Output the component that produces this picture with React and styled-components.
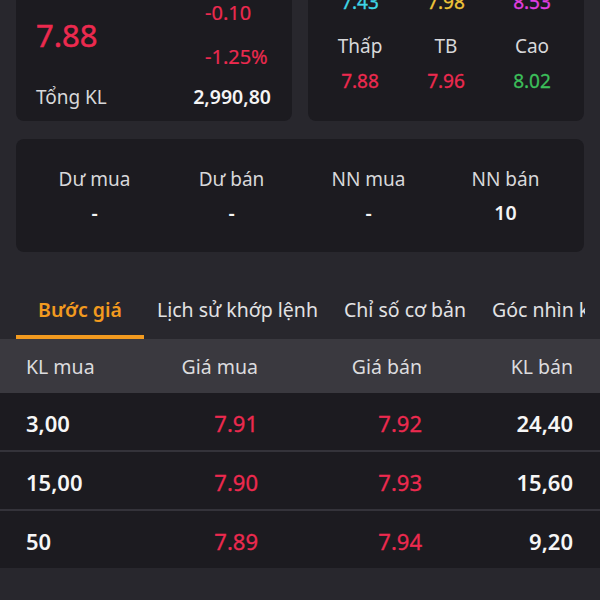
import styled, { createGlobalStyle } from "styled-components";

const GlobalStyle = createGlobalStyle`
  html, body {
    margin: 0;
    padding: 0;
    background: #28272d;
    font-family: "Noto Sans", "Open Sans", sans-serif;
  }
`;

const RED = "#ec2a4f";

const summary = [
  [
    { label: "Sàn", value: "7.43", color: "#3fd6e6" },
    { label: "TC", value: "7.98", color: "#f0c63a" },
    { label: "Trần", value: "8.53", color: "#e23fe0" },
  ],
  [
    { label: "Thấp", value: "7.88", color: RED },
    { label: "TB", value: "7.96", color: RED },
    { label: "Cao", value: "8.02", color: "#3cbf5a" },
  ],
];

const flows = [
  { label: "Dư mua", value: "-" },
  { label: "Dư bán", value: "-" },
  { label: "NN mua", value: "-" },
  { label: "NN bán", value: "10" },
];

const tabs = ["Bước giá", "Lịch sử khớp lệnh", "Chỉ số cơ bản", "Góc nhìn kỹ thuật"];

const book = [
  ["3,00", "7.91", "7.92", "24,40"],
  ["15,00", "7.90", "7.93", "15,60"],
  ["50", "7.89", "7.94", "9,20"],
];

function App() {
  return (
    <>
      <GlobalStyle />
      <Screen>
        <Page>
          <TopGrid>
            <Card>
              <PriceRow>
                <BigPrice>7.88</BigPrice>
                <Changes>
                  <Change>-0.10</Change>
                  <Change>-1.25%</Change>
                </Changes>
              </PriceRow>
              <TotalRow>
                <Label>Tổng KL</Label>
                <Strong>2,990,80</Strong>
              </TotalRow>
            </Card>
            <StatCard>
              {summary.map((row, i) => (
                <StatRow key={i}>
                  {row.map((s) => (
                    <Cell key={s.label}>
                      <Label>{s.label}</Label>
                      <Value color={s.color}>{s.value}</Value>
                    </Cell>
                  ))}
                </StatRow>
              ))}
            </StatCard>
          </TopGrid>
          <FlowCard>
            {flows.map((f) => (
              <Cell key={f.label} gap={6}>
                <Label>{f.label}</Label>
                <Strong>{f.value}</Strong>
              </Cell>
            ))}
          </FlowCard>
        </Page>
        <TabBar>
          {tabs.map((t, i) => (
            <Tab key={t} active={i === 0}>
              {t}
            </Tab>
          ))}
        </TabBar>
        <Table>
          <HeadRow>
            <span>KL mua</span>
            <span>Giá mua</span>
            <span>Giá bán</span>
            <span>KL bán</span>
          </HeadRow>
          {book.map((r) => (
            <BookRow key={r[0]}>
              <Qty>{r[0]}</Qty>
              <Price>{r[1]}</Price>
              <Price>{r[2]}</Price>
              <Qty>{r[3]}</Qty>
            </BookRow>
          ))}
        </Table>
      </Screen>
    </>
  );
}

const Screen = styled.div`
  width: 600px;
  height: 600px;
  overflow: hidden;
  background: #28272d;
`;

const Page = styled.div`
  margin-top: -70px;
  padding: 0 16px;
`;

const TopGrid = styled.div`
  display: grid;
  grid-template-columns: 1fr 1fr;
  gap: 16px;
`;

const Card = styled.div`
  background: #1c1b20;
  border-radius: 8px;
  padding: 0 21px 10px 20px;
  display: flex;
  flex-direction: column;
  justify-content: flex-end;
`;

const PriceRow = styled.div`
  display: flex;
  align-items: center;
  justify-content: space-between;
`;

const BigPrice = styled.div`
  color: ${RED};
  font-size: 31px;
  line-height: 40px;
  -webkit-text-stroke: 0.5px ${RED};
`;

const Changes = styled.div`
  display: flex;
  flex-direction: column;
  gap: 16px;
  width: 66px;
`;

const Change = styled.div`
  color: ${RED};
  font-size: 20px;
  line-height: 28px;
  white-space: nowrap;
  -webkit-text-stroke: 0.2px ${RED};
`;

const TotalRow = styled.div`
  display: flex;
  justify-content: space-between;
  margin-top: 12px;
`;

const Label = styled.div`
  color: #d8d8da;
  font-size: 19px;
  line-height: 28px;
  white-space: nowrap;
`;

const Strong = styled.div`
  color: #f4f4f4;
  font-size: 19.5px;
  line-height: 28px;
  font-weight: 600;
`;

const Value = styled.div`
  color: ${({ color }) => color};
  font-size: 19px;
  line-height: 28px;
  -webkit-text-stroke: 0.3px ${({ color }) => color};
`;

const StatCard = styled.div`
  background: #1c1b20;
  border-radius: 8px;
  padding: 23px 9px 26px;
  display: flex;
  flex-direction: column;
  gap: 16px;
`;

const StatRow = styled.div`
  display: grid;
  grid-template-columns: repeat(3, 1fr);
`;

const Cell = styled.div`
  display: flex;
  flex-direction: column;
  align-items: center;
  gap: ${({ gap }) => gap ?? 7}px;
`;

const FlowCard = styled.div`
  margin-top: 18px;
  background: #1c1b20;
  border-radius: 8px;
  padding: 26px 10px 25px;
  display: grid;
  grid-template-columns: repeat(4, 1fr);
`;

const TabBar = styled.div`
  margin: 39px 15px 0 0;
  padding-left: 16px;
  display: flex;
  white-space: nowrap;
  overflow: hidden;
`;

const Tab = styled.div`
  flex-shrink: 0;
  box-sizing: border-box;
  height: 48px;
  padding: 5px 13px 0;
  min-width: ${({ active }) => (active ? "128px" : "0")};
  text-align: center;
  font-size: 19.5px;
  line-height: 28px;
  color: ${({ active }) => (active ? "#f29a1f" : "#e2e2e4")};
  font-weight: ${({ active }) => (active ? 600 : 400)};
  border-bottom: 4px solid ${({ active }) => (active ? "#f29a1f" : "transparent")};
`;

const Table = styled.div`
  display: flex;
  flex-direction: column;
  gap: 2px;
  background: #34333a;
`;

const rowGrid = `
  display: grid;
  grid-template-columns: 114px 118px 164px 151px;
  padding: 0 27px 0 26px;
  align-items: center;
`;

const HeadRow = styled.div`
  ${rowGrid}
  height: 54px;
  margin-bottom: -2px;
  background: #3a393f;
  color: #dcdcde;
  font-size: 19.5px;
  span:not(:first-child) {
    text-align: right;
  }
`;

const BookRow = styled.div`
  ${rowGrid}
  height: 57px;
  padding-top: 2px;
  box-sizing: border-box;
  background: #1c1b20;
  font-size: 22px;
  & > :last-child {
    text-align: right;
  }
`;

const Qty = styled.span`
  color: #f6f6f6;
  font-weight: 600;
`;

const Price = styled.span`
  color: ${RED};
  text-align: right;
  -webkit-text-stroke: 0.3px ${RED};
`;

export default App;
